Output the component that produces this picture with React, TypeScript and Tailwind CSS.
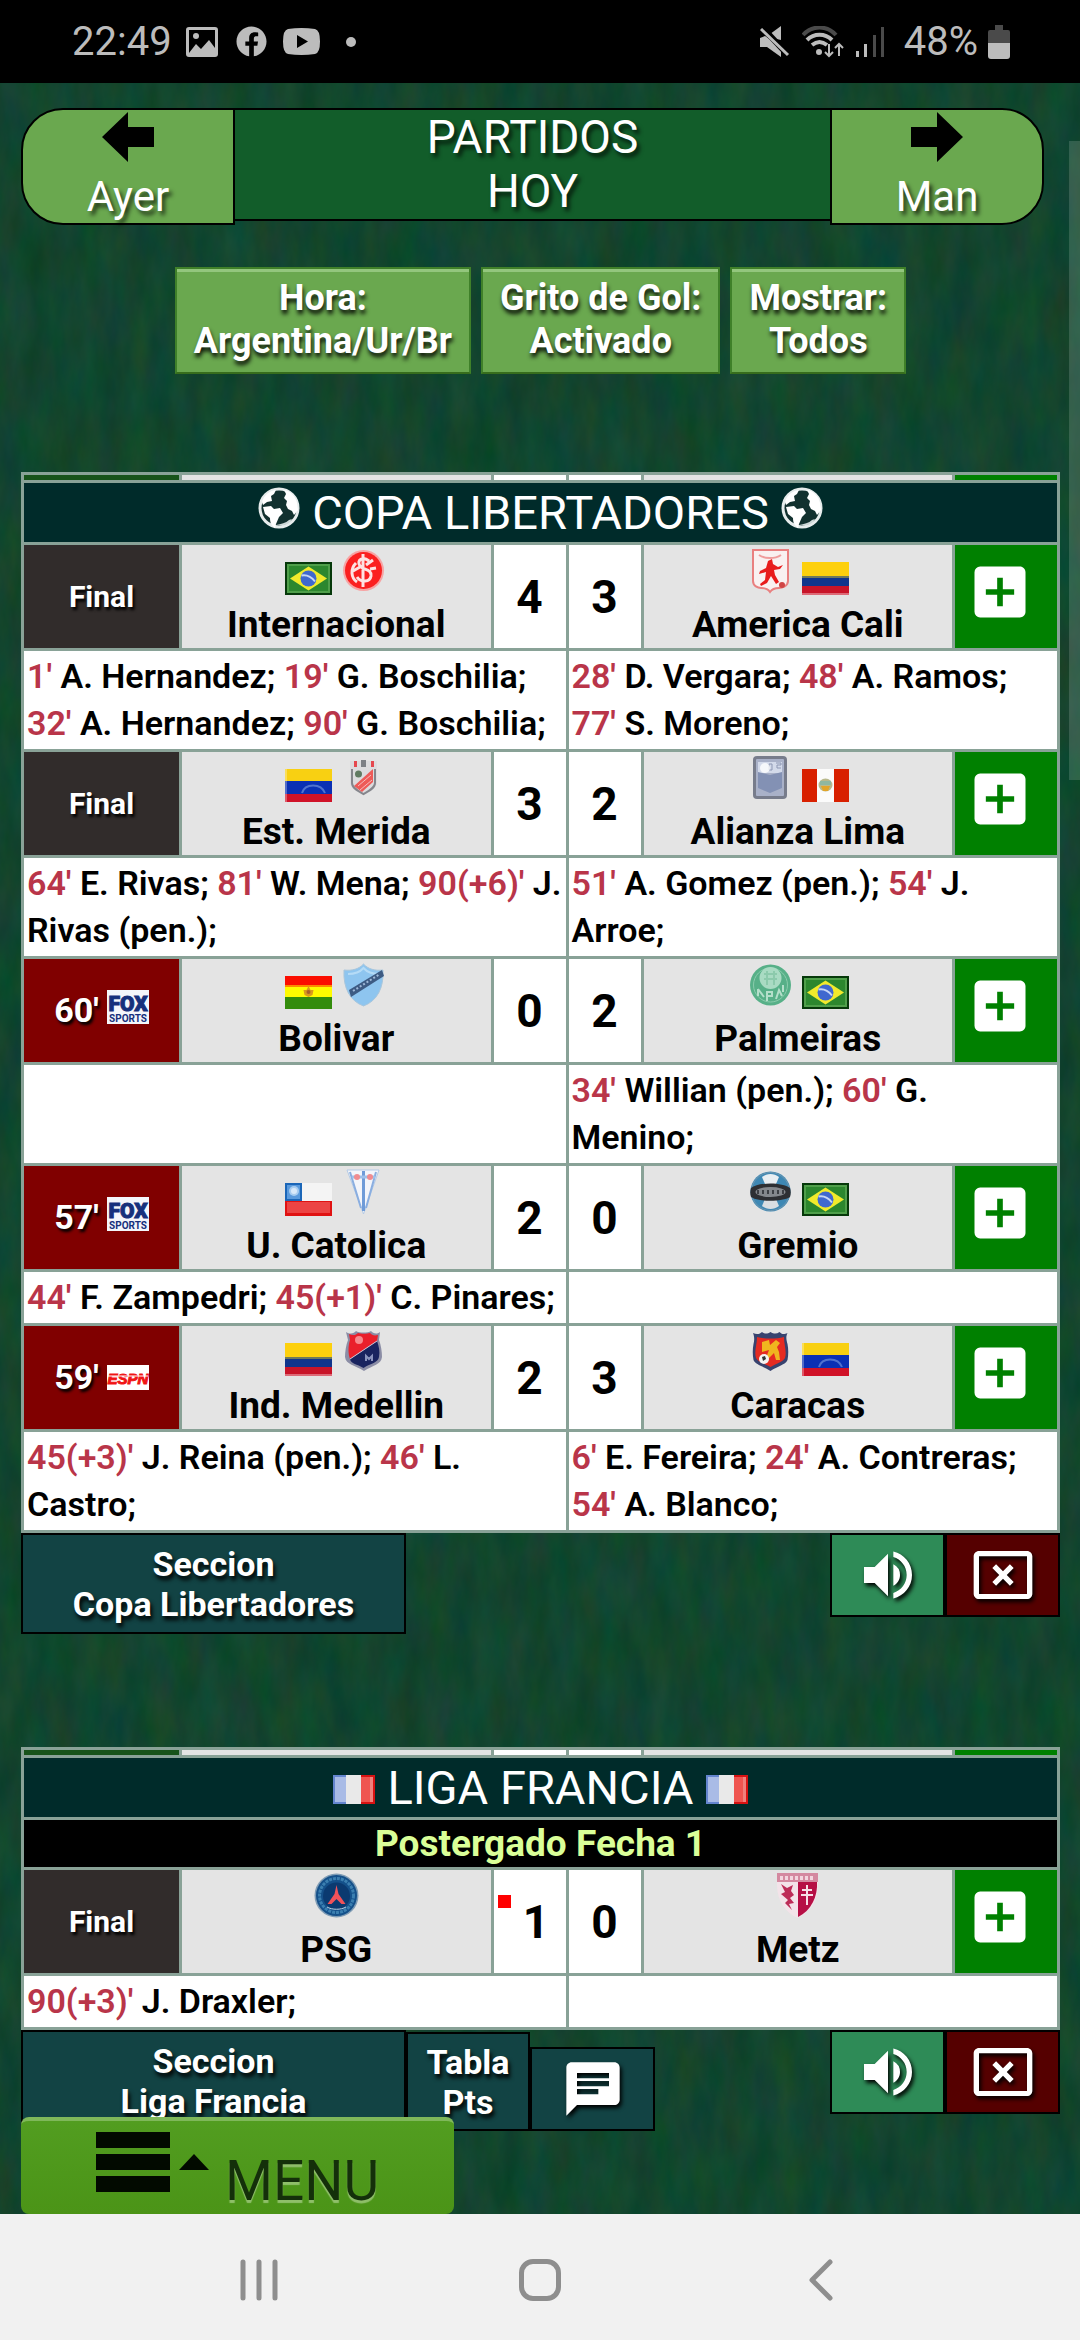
import type { ReactNode } from 'react'
import { Fragment } from 'react'
import { FaFacebook } from 'react-icons/fa'
import { MdAddBox, MdCancelPresentation, MdChat, MdVolumeUp } from 'react-icons/md'

type Goal = [minute: string, player: string]

interface Team {
  name: string
  flag?: ReactNode
  crest: ReactNode
  score: number
  redCard?: boolean
  goals: Goal[]
}

interface Match {
  status: string
  channel?: 'fox' | 'espn'
  home: Team
  away: Team
}

/* ---------- flags ---------- */

function FlagBox({ children }: { children: ReactNode }) {
  return (
    <svg viewBox="0 0 47 33" className="h-[33px] w-[47px] shrink-0" aria-hidden="true">
      {children}
    </svg>
  )
}

function Brazil() {
  return (
    <FlagBox>
      <rect width="47" height="33" fill="#06390a" />
      <rect x="2" y="2" width="43" height="29" fill="#4f9f4a" />
      <rect x="4" y="4" width="39" height="25" fill="#2c872e" />
      <path d="M5 16.500L23.500 4.500 42 16.500 23.500 28.500z" fill="#f1ea2c" />
      <circle cx="23.500" cy="16.500" r="8" fill="#3f68cf" />
      <path d="M16.500 13.500c5-1 10 1.500 13.500 6" stroke="#c6d6f5" strokeWidth="2" fill="none" />
    </FlagBox>
  )
}

function Colombia() {
  return (
    <FlagBox>
      <rect width="47" height="33" fill="#c81428" />
      <rect width="47" height="15" fill="#fdd00d" />
      <rect y="15" width="47" height="9" fill="#10358c" />
      <rect y="14" width="47" height="2" fill="#6f7a5c" />
      <rect y="31" width="47" height="2" fill="#dd6a77" />
    </FlagBox>
  )
}

function Venezuela() {
  return (
    <FlagBox>
      <rect width="47" height="33" fill="#d01228" />
      <rect width="47" height="12" fill="#f8d012" />
      <rect y="12" width="47" height="13" fill="#0a30b4" />
      <path d="M17 24c3-10 19-10 23 0" stroke="#4f72cf" strokeWidth="2" fill="none" />
      <rect width="2" height="33" fill="#fff" opacity="0.3" />
    </FlagBox>
  )
}

function Peru() {
  return (
    <FlagBox>
      <rect width="47" height="33" fill="#d82000" />
      <rect x="15" width="17" height="33" fill="#fbfbfb" />
      <ellipse cx="23.500" cy="16" rx="7" ry="6.500" fill="#b9b98c" />
      <path d="M18 12h11v4H18z" fill="#8fb7a0" />
      <path d="M19 17h9l-2 5h-5z" fill="#e2a52a" />
    </FlagBox>
  )
}

function Bolivia() {
  return (
    <FlagBox>
      <rect width="47" height="33" fill="#338c0c" />
      <rect width="47" height="21" fill="#fffb00" />
      <rect width="47" height="10" fill="#fb0d00" />
      <rect y="9" width="47" height="2" fill="#fd8a00" />
      <path d="M23.500 10l2 4h3l-1 5-4 2-4-2-1-5h3z" fill="#d99a1e" />
      <circle cx="23.500" cy="16" r="2" fill="#a8602a" />
    </FlagBox>
  )
}

function Chile() {
  return (
    <FlagBox>
      <rect width="47" height="33" fill="#f4f4f4" />
      <rect y="18" width="47" height="15" fill="#e01212" />
      <rect x="2" y="19" width="43" height="11" fill="#ec4444" />
      <rect width="17" height="18" fill="#1b66b8" />
      <rect x="2" y="2" width="13" height="14" fill="#5a9add" />
      <circle cx="9" cy="8" r="5" fill="#a9cdf0" />
      <circle cx="9" cy="8" r="3" fill="#d8e9fa" />
    </FlagBox>
  )
}

function France() {
  return (
    <svg viewBox="0 0 42 29" className="h-[29px] w-[42px] shrink-0" aria-hidden="true">
      <rect width="42" height="29" fill="#e9e9e9" />
      <rect width="13" height="29" fill="#6485cf" />
      <rect x="2" y="2" width="11" height="25" fill="#a9bbe6" />
      <rect x="28" width="14" height="29" fill="#d81212" />
      <rect x="28" y="2" width="12" height="25" fill="#ef5550" />
      <rect x="37" y="2" width="3" height="25" fill="#f0807c" />
    </svg>
  )
}

/* ---------- crests ---------- */

function CrestBox({ children }: { children: ReactNode }) {
  return (
    <svg viewBox="0 0 47 47" className="h-[47px] w-[47px] shrink-0" aria-hidden="true">
      {children}
    </svg>
  )
}

function Internacional() {
  return (
    <CrestBox>
      <circle cx="23.500" cy="23.500" r="20.500" fill="#f7a3a3" />
      <circle cx="23.500" cy="23.500" r="18.500" fill="#fb2020" />
      <path
        d="M23 7v33M29 14c-6-5-13-1-9 5 3 4 12 3 11 10-1 6-10 7-14 1M16 16c-6 6-5 15 1 19M33 13l-7 5M13 24l7-4M30 22l6-1"
        stroke="#fde3e3"
        strokeWidth="3"
        fill="none"
      />
    </CrestBox>
  )
}

function AmericaCali() {
  return (
    <CrestBox>
      <path d="M6 3h35v31c0 5-6 7-9 7-4 0-7 1-9 4-2-3-5-4-9-4-3 0-8-2-8-7z" fill="#f9f1f1" stroke="#e98080" strokeWidth="2" />
      <path d="M12 8c6 4 16 4 22 0" stroke="#ef9c9c" strokeWidth="2" fill="none" />
      <path d="M21 14l4-2 1 5 5 3 5-2-3 4-6 1 1 5 4 7-3 2-5-8-4 7-6 3-1-2 5-4 1-8-7 2 1-3 6-3z" fill="#e81c1c" />
      <circle cx="35" cy="38" r="3" fill="#d04545" />
    </CrestBox>
  )
}

function EstMerida() {
  return (
    <CrestBox>
      <path d="M10 7h27v21c0 6-7 10-13.500 13C17 38 10 34 10 28z" fill="#dcdcde" />
      <path d="M12 15v14c0 5 6 8 11.500 11C29 37 35 34 35 29V15" fill="none" stroke="#85868c" strokeWidth="2" />
      <path d="M14 7h3v6h-3zM31 7h3v6h-3z" fill="#e5484f" />
      <path d="M21 6h5v7h-5z" fill="#7d8085" />
      <path d="M14 32l19-17v13L22 38z" fill="#ee5b58" />
      <path d="M18 32l13-11M20 36l12-10" stroke="#f6bcbc" strokeWidth="1" />
      <circle cx="18.500" cy="20" r="3.500" fill="#607a62" />
    </CrestBox>
  )
}

function AlianzaLima() {
  return (
    <CrestBox>
      <rect x="6" y="2" width="34" height="43" rx="4" fill="#777c8b" />
      <rect x="9" y="5" width="28" height="37" rx="1" fill="#a9b1c8" />
      <rect x="11" y="8" width="24" height="11" fill="#d3daea" />
      <path d="M22 10h3v6h-3zM29 9h5v2h-4v3h4" stroke="#8d97b3" strokeWidth="1" fill="none" />
      <path d="M11 18l12 3 12-3v16l-12 5-12-5z" fill="#8391b4" />
      <circle cx="18" cy="14" r="5" fill="#fff" opacity="0.8" />
    </CrestBox>
  )
}

function BolivarCrest() {
  return (
    <CrestBox>
      <path d="M4 9c8 1 15-1 19.500-6C28 8 35 10 43 9c1 18-6 31-19.500 36C10 40 3 27 4 9z" fill="#8ec5ef" stroke="#a9c6dc" strokeWidth="1" />
      <path d="M8 13c7 0 12-2 15.500-6 3.500 4 9 6 15.500 6" fill="none" stroke="#b5dbf6" strokeWidth="2" />
      <path d="M9 29L42 9l2 6-33 21z" fill="#3d5b83" />
      <path d="M13 30L40 13" stroke="#9fb9d8" strokeWidth="2" strokeDasharray="2 2" />
    </CrestBox>
  )
}

function PalmeirasCrest() {
  return (
    <CrestBox>
      <circle cx="23.500" cy="24" r="20.500" fill="#57b088" />
      <circle cx="23.500" cy="24" r="17" fill="none" stroke="#8accac" strokeWidth="1" />
      <circle cx="23.500" cy="17" r="11" fill="#a9dbc3" />
      <path d="M17 13h13M17 18h13M20 10v14M27 10v14" stroke="#8ccaac" strokeWidth="2" />
      <path d="M11 28v7M11 28l6 8M20 30v10M20 31h5v4h-5M29 38l3-9 3 6M36 24v7" stroke="#b4dfca" strokeWidth="2" fill="none" />
    </CrestBox>
  )
}

function CatolicaCrest() {
  return (
    <CrestBox>
      <path d="M7 2h32L23.500 46z" fill="#f3f5fa" stroke="#b5cbe6" strokeWidth="1" />
      <path d="M10 4l11 36M36 4L26 40" stroke="#8aaee0" strokeWidth="2" fill="none" />
      <path d="M23.500 3v40" stroke="#6f9bd8" strokeWidth="3" />
      <path d="M12 9h23" stroke="#9ec0ea" strokeWidth="3" />
      <circle cx="17" cy="9" r="3" fill="#f08c90" />
      <circle cx="30" cy="9" r="3" fill="#f08c90" />
    </CrestBox>
  )
}

function GremioCrest() {
  return (
    <CrestBox>
      <circle cx="23.500" cy="23.500" r="20" fill="#3e88b4" />
      <circle cx="23.500" cy="23.500" r="19" fill="none" stroke="#6e96af" strokeWidth="1" />
      <path d="M15 9c5-4 12-4 17 0l-3 7H18z" fill="#e8eef2" />
      <path d="M15 38c5 4 12 4 17 0l-3-7H18z" fill="#d9dee2" />
      <path d="M4 20c8-6 31-6 39 0 1 3 1 6 0 9-8 5-31 5-39 0-1-3-1-6 0-9z" fill="#2d2f33" />
      <ellipse cx="23.500" cy="24" rx="15" ry="5" fill="#84888d" />
      <path d="M10 24h27" stroke="#3d4045" strokeWidth="4" strokeDasharray="2 3" />
    </CrestBox>
  )
}

function MedellinCrest() {
  return (
    <CrestBox>
      <path d="M6 4c5 3 8 1 10-1 3 2 12 2 15 0 2 2 5 4 9 1l-1 8c2 5 3 12 3 17-1 8-9 8-18 14C15 37 6 37 5 29c0-5 1-12 3-17z" fill="#8b8da5" />
      <path d="M9 6c4 2 7 1 9-1 3 1 9 1 12 0 2 2 4 3 8 2l-1 6L10 31C8 26 8 18 10 12z" fill="#ea1f2b" />
      <path d="M37 13c2 5 3 11 2 16-1 6-8 6-15.500 11C17 36 11 36 10 31z" fill="#19235f" />
      <path d="M10 31l27-18" stroke="#d9c4d2" strokeWidth="1" />
      <path d="M26 33v-5l3 3 3-3v5" stroke="#8a93bd" strokeWidth="2" fill="none" />
      <circle cx="19" cy="12" r="4" fill="#f58a8e" />
    </CrestBox>
  )
}

function CaracasCrest() {
  return (
    <CrestBox>
      <path d="M6 5c4 2 7 1 9-1 3 2 5 2 8.500 0 3.500 2 6 2 9 0 2 2 4 3 8 1-2 4-1 7 0 11 1 5 1 11 0 16-2 5-10 6-17 11-7-5-15-6-17-11-1-5-1-11 0-16 1-4 1-7-.5-11z" fill="#38436f" />
      <path d="M10 9c8 2 19 2 27 0 0 8 3 14 1 21-2 4-8 5-14.500 9C17 35 11 34 9 30c-2-7 1-13 1-21z" fill="#e52b22" />
      <path d="M15 14l7-2 1 5 6-5 4 3-3 4 2 5 1 8h-4l-2-7-5 5h-3l3-8-7 2z" fill="#f0b51f" />
      <circle cx="17" cy="31" r="5" fill="#f4f4f4" />
      <path d="M15 29l3-1 1 3-3 2z" fill="#333" />
    </CrestBox>
  )
}

function PsgCrest() {
  return (
    <CrestBox>
      <circle cx="23.500" cy="23.500" r="22" fill="#7f9cb5" />
      <circle cx="23.500" cy="23.500" r="20.500" fill="#14508a" />
      <circle cx="23.500" cy="23.500" r="17" fill="none" stroke="#3b7fb0" strokeWidth="3" strokeDasharray="3 1" />
      <circle cx="23.500" cy="24" r="13.500" fill="#0b3a70" />
      <path d="M23.500 13l2 9 7 10h-4l-5-5-5 5h-4l7-10z" fill="#f0525a" />
      <path d="M14 35c5 3 14 3 19 0" stroke="#b8cfe0" strokeWidth="1" fill="none" />
    </CrestBox>
  )
}

function MetzCrest() {
  return (
    <CrestBox>
      <path d="M3 1h41v12c0 16-9 28-20.500 33C12 41 3 29 3 13z" fill="#f3e3e9" />
      <path d="M3 1h41v9H3z" fill="#d489a0" />
      <path d="M6 6h35" stroke="#f2d5de" strokeWidth="4" strokeDasharray="3 2" />
      <path d="M24 10h19c1 14-6 29-19 35z" fill="#b60f45" />
      <path d="M33 13v20M28 18h10M27 23h12" stroke="#f6dfe6" strokeWidth="2" />
      <path d="M7 12l6 4 6-3-2 6 3 4-4 3 4 5-5 1 3 6-7-7 3-3-7-6 4-2z" fill="#bd2c58" />
    </CrestBox>
  )
}

function Globe() {
  return (
    <svg viewBox="0 0 42 42" className="h-[42px] w-[42px] shrink-0" aria-hidden="true">
      <circle cx="21" cy="21" r="19" fill="#12312f" stroke="#e6ecec" strokeWidth="3" />
      <path d="M4 15C6 8 11 4 18 3l-2 4-3 2 1 5-5 1-4 3zM5 20l8-1 3 3 6-1 3 5-4 4-3 7-1 4c-4-3-5-6-5-10l-5-4z" fill="#fff" />
      <path d="M26 3c7 1 12 7 13 13l1 7-4 5-2-4-4-2-2-4 1-4-3-3 2-4z" fill="#fff" />
      <path d="M18 38c6 1 11 0 14-3l2-3-3 1c-3 3-8 4-13 5z" fill="#cfd9d9" />
    </svg>
  )
}

/* ---------- channel logos ---------- */

function Channel({ name }: { name: 'fox' | 'espn' }) {
  if (name === 'espn') {
    return (
      <svg viewBox="0 0 42 25" className="h-[25px] w-[42px] [text-shadow:none]" role="img" aria-label="ESPN">
        <rect width="42" height="25" fill="#fff" />
        <text x="21" y="19" textAnchor="middle" fontFamily="Liberation Sans, sans-serif" fontSize="15" fontWeight="bold" fontStyle="italic" fill="#f01414" stroke="#f01414">ESPN</text>
        <path d="M1 11h40" stroke="#fff" strokeWidth="1" />
      </svg>
    )
  }
  return (
    <svg viewBox="0 0 42 34" className="h-[34px] w-[42px] [text-shadow:none]" role="img" aria-label="Fox Sports">
      <rect width="42" height="34" fill="#f4f6fb" />
      <text x="21" y="21" textAnchor="middle" fontFamily="Roboto, sans-serif" fontSize="21" fontWeight="900" fill="#16307c" stroke="#16307c">FOX</text>
      <text x="21" y="32" textAnchor="middle" fontFamily="Roboto, sans-serif" fontSize="10" fontWeight="700" fill="#16307c">SPORTS</text>
    </svg>
  )
}

/* ---------- data ---------- */

const libertadores: Match[] = [
  {
    status: 'Final',
    home: { name: 'Internacional', flag: <Brazil />, crest: <Internacional />, score: 4, goals: [["1'", 'A. Hernandez'], ["19'", 'G. Boschilia'], ["32'", 'A. Hernandez'], ["90'", 'G. Boschilia']] },
    away: { name: 'America Cali', flag: <Colombia />, crest: <AmericaCali />, score: 3, goals: [["28'", 'D. Vergara'], ["48'", 'A. Ramos'], ["77'", 'S. Moreno']] },
  },
  {
    status: 'Final',
    home: { name: 'Est. Merida', flag: <Venezuela />, crest: <EstMerida />, score: 3, goals: [["64'", 'E. Rivas'], ["81'", 'W. Mena'], ["90(+6)'", 'J. Rivas (pen.)']] },
    away: { name: 'Alianza Lima', flag: <Peru />, crest: <AlianzaLima />, score: 2, goals: [["51'", 'A. Gomez (pen.)'], ["54'", 'J. Arroe']] },
  },
  {
    status: "60'",
    channel: 'fox',
    home: { name: 'Bolivar', flag: <Bolivia />, crest: <BolivarCrest />, score: 0, goals: [] },
    away: { name: 'Palmeiras', flag: <Brazil />, crest: <PalmeirasCrest />, score: 2, goals: [["34'", 'Willian (pen.)'], ["60'", 'G. Menino']] },
  },
  {
    status: "57'",
    channel: 'fox',
    home: { name: 'U. Catolica', flag: <Chile />, crest: <CatolicaCrest />, score: 2, goals: [["44'", 'F. Zampedri'], ["45(+1)'", 'C. Pinares']] },
    away: { name: 'Gremio', flag: <Brazil />, crest: <GremioCrest />, score: 0, goals: [] },
  },
  {
    status: "59'",
    channel: 'espn',
    home: { name: 'Ind. Medellin', flag: <Colombia />, crest: <MedellinCrest />, score: 2, goals: [["45(+3)'", 'J. Reina (pen.)'], ["46'", 'L. Castro']] },
    away: { name: 'Caracas', flag: <Venezuela />, crest: <CaracasCrest />, score: 3, goals: [["6'", 'E. Fereira'], ["24'", 'A. Contreras'], ["54'", 'A. Blanco']] },
  },
]

const francia: Match[] = [
  {
    status: 'Final',
    home: { name: 'PSG', crest: <PsgCrest />, score: 1, redCard: true, goals: [["90(+3)'", 'J. Draxler']] },
    away: { name: 'Metz', crest: <MetzCrest />, score: 0, goals: [] },
  },
]

/* ---------- table ---------- */

function StatusCell({ status, channel }: { status: string; channel?: 'fox' | 'espn' }) {
  if (!channel) {
    return (
      <td className="h-[103px] bg-[#312c2b] text-center text-[30px] font-bold text-white [text-shadow:2px_3px_3px_#000]">
        {status}
      </td>
    )
  }
  return (
    <td className="h-[103px] bg-[#800000]">
      <div className="flex items-center justify-center gap-2 text-[34px] font-bold text-white [text-shadow:2px_3px_3px_#000]">
        {status}
        <div className={channel === 'fox' ? 'pb-[8px]' : ''}>
          <Channel name={channel} />
        </div>
      </div>
    </td>
  )
}

function TeamCell({ team, away }: { team: Team; away?: boolean }) {
  return (
    <td className="bg-[#e4e4e4] pt-[2px] align-top">
      <div className="flex h-[54px] items-start justify-center gap-2">
        {away && team.crest}
        {team.flag && <div className="pt-[15px]">{team.flag}</div>}
        {!away && team.crest}
      </div>
      <div className="text-center text-[37px] leading-[47px] font-bold">{team.name}</div>
    </td>
  )
}

function ScoreCell({ team }: { team: Team }) {
  return (
    <td className="bg-white text-[46px] leading-[54px] font-bold">
      <div className="flex justify-center gap-3">
        {team.redCard && <span className="-ml-3 h-[13px] w-[13px] bg-[#ff0000]" />}
        {team.score}
      </div>
    </td>
  )
}

function GoalsCell({ goals }: { goals: Goal[] }) {
  return (
    <td colSpan={3} className="h-[51px] bg-white px-[3px] py-[2px] align-top text-[34px] leading-[47px] font-semibold">
      {goals.map(([minute, player]) => (
        <Fragment key={minute}>
          <span className="text-[#b93549]">{minute}</span> {player};{' '}
        </Fragment>
      ))}
    </td>
  )
}

function MatchRows({ match }: { match: Match }) {
  return (
    <>
      <tr>
        <StatusCell status={match.status} channel={match.channel} />
        <TeamCell team={match.home} />
        <ScoreCell team={match.home} />
        <ScoreCell team={match.away} />
        <TeamCell team={match.away} away />
        <td className="bg-[#008000]">
          <button type="button" aria-label="Ver detalle" className="block w-full pr-3 pb-[10px] text-white">
            <MdAddBox className="mx-auto h-[68px] w-[68px]" />
          </button>
        </td>
      </tr>
      <tr>
        <GoalsCell goals={match.home.goals} />
        <GoalsCell goals={match.away.goals} />
      </tr>
    </>
  )
}

interface LeagueProps {
  title: string
  icon: ReactNode
  note?: string
  matches: Match[]
}

function LeagueTable({ title, icon, note, matches }: LeagueProps) {
  return (
    <table className="w-full table-fixed border-separate border-spacing-[3px] bg-[#89a297] text-black">
      <colgroup>
        <col className="w-[155px]" />
        <col />
        <col className="w-[72px]" />
        <col className="w-[72px]" />
        <col />
        <col className="w-[102px]" />
      </colgroup>
      <tbody>
        <tr>
          <td className="h-[5px] bg-[#17531a]" />
          <td className="bg-[#e4e4e4]" />
          <td className="bg-white" />
          <td className="bg-white" />
          <td className="bg-[#e4e4e4]" />
          <td className="bg-[#008000]" />
        </tr>
        <tr>
          <th colSpan={6} className="h-[59px] bg-[#002b2a] font-normal text-white">
            <div className="flex items-baseline justify-center gap-3 text-[47px] leading-[54px]">
              {icon}
              {title}
              {icon}
            </div>
          </th>
        </tr>
        {note && (
          <tr>
            <th colSpan={6} className="bg-black text-[37px] leading-[47px] font-bold text-[#daff98]">
              {note}
            </th>
          </tr>
        )}
        {matches.map((m) => (
          <MatchRows key={m.home.name} match={m} />
        ))}
      </tbody>
    </table>
  )
}

const sectionBtn =
  'border-2 border-black bg-[#124344] text-center text-[34px] leading-[40px] font-bold text-white [text-shadow:2px_4px_4px_#000]'

function SoundAndClose() {
  return (
    <div className="ml-auto flex">
      <button type="button" aria-label="Sonido" className="flex h-[84px] w-[115px] items-center justify-center border-2 border-black bg-[#2e8b57] text-white">
        <MdVolumeUp className="h-16 w-16 drop-shadow-[2px_3px_2px_#000]" />
      </button>
      <button type="button" aria-label="Cerrar" className="flex h-[84px] w-[115px] items-center justify-center border-2 border-black bg-[#550000] text-white">
        <MdCancelPresentation className="h-16 w-16 drop-shadow-[2px_3px_2px_#000]" />
      </button>
    </div>
  )
}

/* ---------- phone chrome ---------- */

function StatusBar() {
  return (
    <div className="flex h-[83px] items-center bg-black pr-[70px] pl-[72px] text-[40px] leading-[47px] text-[#bcbcbc]">
      <span className="mr-[14px]">22:49</span>
      <svg viewBox="0 0 32 30" className="mr-[18px] h-[30px] w-8" aria-hidden="true">
        <path d="M3 0h26a3 3 0 0 1 3 3v24a3 3 0 0 1-3 3H3a3 3 0 0 1-3-3V3a3 3 0 0 1 3-3zm0 3v23l7-9 5 5 8-9 6 8V3z" fill="currentColor" fillRule="evenodd" />
        <circle cx="10" cy="9" r="3" fill="currentColor" />
        <path d="M4 27l6-8 5 5 8-9 6 8v4z" fill="currentColor" />
      </svg>
      <FaFacebook className="mr-4 h-[31px] w-[31px]" />
      <svg viewBox="0 0 37 27" className="mr-[26px] h-[27px] w-[37px]" aria-hidden="true">
        <path d="M5 1Q18.500-1 32 1q5 1 5 12.500T32 26q-13.500 2-27 0-5-1-5-12.500T5 1zm9 6v13l11-6.500z" fill="currentColor" fillRule="evenodd" />
      </svg>
      <span className="h-[10px] w-[10px] rounded-full bg-[#bcbcbc]" />
      <svg viewBox="0 0 30 32" className="mr-3 ml-auto h-8 w-[30px]" aria-hidden="true">
        <path d="M0 11h6L21 0v14L8 11zM0 12v9h7l14 10V21L5 10z" fill="currentColor" />
        <path d="M2 1l26 28" stroke="#000" strokeWidth="6" />
        <path d="M1 3l27 26" stroke="currentColor" strokeWidth="3" />
      </svg>
      <svg viewBox="0 0 42 32" className="mr-3 h-8 w-[42px]" fill="none" aria-hidden="true">
        <path d="M1 9c9-10 24-10 33 0" stroke="#4a4a4a" strokeWidth="4" />
        <path d="M5 14c7-7 18-7 25 0M10 19c5-4 10-4 15 0" stroke="currentColor" strokeWidth="4" />
        <circle cx="17" cy="26" r="3" fill="currentColor" />
        <path d="M27 18v12M23 26l4 4 4-4M37 30V18M33 22l4-4 4 4" stroke="currentColor" strokeWidth="2" />
      </svg>
      <svg viewBox="0 0 28 30" className="mr-[20px] h-[30px] w-7" aria-hidden="true">
        <path d="M0 24h3v6H0zM8 17h3v13H8z" fill="currentColor" />
        <path d="M17 8h3v22h-3zM25 0h3v30h-3z" fill="#4a4a4a" />
      </svg>
      <span className="mr-[10px]">48%</span>
      <svg viewBox="0 0 22 34" className="h-[34px] w-[22px]" aria-hidden="true">
        <path d="M7 0h8v5h5a2 2 0 0 1 2 2v12H0V7a2 2 0 0 1 2-2h5z" fill="#4a4a4a" />
        <path d="M0 18h22v13a3 3 0 0 1-3 3H3a3 3 0 0 1-3-3z" fill="currentColor" />
      </svg>
    </div>
  )
}

function NavBar() {
  return (
    <nav className="grid h-[126px] grid-cols-3 place-items-center bg-[#f1f1f1] px-[118px] pt-[5px] text-[#8e8e8e]">
      <button type="button" aria-label="Recientes">
        <svg viewBox="0 0 38 42" className="h-[42px] w-[38px]" stroke="currentColor" strokeWidth="5" strokeLinecap="round">
          <path d="M3 3v36M19 3v36M35 3v36" />
        </svg>
      </button>
      <button type="button" aria-label="Inicio" className="h-[42px] w-[42px] rounded-[14px] border-[5px] border-[#8e8e8e]" />
      <button type="button" aria-label="Atras">
        <svg viewBox="0 0 24 42" className="h-[42px] w-6" fill="none" stroke="currentColor" strokeWidth="5" strokeLinecap="round" strokeLinejoin="round">
          <path d="M21 3L3 21l18 18" />
        </svg>
      </button>
    </nav>
  )
}

function Felt() {
  return (
    <svg className="absolute inset-0 h-full w-full" aria-hidden="true">
      <defs>
        <filter id="felt" x="0" y="0" width="100%" height="100%" colorInterpolationFilters="sRGB">
          <feTurbulence type="fractalNoise" baseFrequency="0.04 0.015" numOctaves="4" seed="7" />
          <feColorMatrix values="0.120 0 0 0 0.010  0 0.080 0 0 0.230  0 0 0.100 0 0.130  0 0 0 0 1" />
        </filter>
      </defs>
      <rect width="100%" height="100%" fill="#11462e" />
      <rect width="100%" height="100%" filter="url(#felt)" />
    </svg>
  )
}

const dayBtn =
  'flex h-[117px] flex-col items-center border-2 border-black bg-[#6aa84f] pt-[2px] text-[42px] leading-[48px] text-white [text-shadow:3px_4px_4px_rgba(0,0,0,0.7)]'
const filterBtn =
  'border-2 border-t-[#3f8029] border-r-[#3f8029] border-b-[#376d1c] border-l-[#3f8029] bg-[#6aa84f] px-[17px] pt-2 pb-[9px] text-[36px] leading-[43px] font-bold text-white shadow-[inset_0_3px_0_#93c67d] [text-shadow:1px_4px_4px_rgba(0,0,0,0.9)]'

export default function App() {
  return (
    <div className="flex min-h-screen flex-col font-['Roboto',sans-serif]">
      <StatusBar />
      <main className="relative flex-1 pt-[25px] pr-[20px] pb-20 pl-[21px]">
        <Felt />
        <div className="relative">
          <header className="mr-4 flex items-start">
            <button type="button" className={`${dayBtn} w-[214px] rounded-l-[42px]`}>
              <svg viewBox="0 0 52 50" className="h-[50px] w-[52px]" aria-hidden="true">
                <path d="M0 25L26 0v15h26v20H26v15z" fill="#000" />
              </svg>
              <span className="pt-[11px]">Ayer</span>
            </button>
            <h1 className="h-[113px] flex-1 border-y-2 border-black bg-[#125d2a] text-center text-[46px] leading-[54px] text-white [text-shadow:3px_4px_4px_rgba(0,0,0,0.7)]">
              PARTIDOS
              <br />
              HOY
            </h1>
            <button type="button" className={`${dayBtn} w-[214px] rounded-r-[42px]`}>
              <svg viewBox="0 0 52 50" className="h-[50px] w-[52px]" aria-hidden="true">
                <path d="M52 25L26 0v15H0v20h26v15z" fill="#000" />
              </svg>
              <span className="pt-[11px]">Man</span>
            </button>
          </header>

          <div className="mt-[42px] flex justify-center gap-[10px]">
            <button type="button" className={filterBtn}>
              Hora:
              <br />
              Argentina/Ur/Br
            </button>
            <button type="button" className={filterBtn}>
              Grito de Gol:
              <br />
              Activado
            </button>
            <button type="button" className={filterBtn}>
              Mostrar:
              <br />
              Todos
            </button>
          </div>

          <section className="mt-[98px]">
            <LeagueTable title="COPA LIBERTADORES" icon={<Globe />} matches={libertadores} />
            <div className="flex items-start">
              <button type="button" className={`${sectionBtn} h-[101px] w-[385px]`}>
                Seccion
                <br />
                Copa Libertadores
              </button>
              <SoundAndClose />
            </div>
          </section>

          <section className="mt-[113px]">
            <LeagueTable title="LIGA FRANCIA" icon={<France />} note="Postergado Fecha 1" matches={francia} />
            <div className="flex items-start">
              <div className="flex items-end">
                <button type="button" className={`${sectionBtn} h-[101px] w-[385px]`}>
                  Seccion
                  <br />
                  Liga Francia
                </button>
                <button type="button" className={`${sectionBtn} h-[99px] w-[124px]`}>
                  Tabla
                  <br />
                  Pts
                </button>
                <button type="button" aria-label="Comentarios" className={`${sectionBtn} flex h-[84px] w-[125px] items-center justify-center`}>
                  <MdChat className="h-16 w-16 drop-shadow-[2px_3px_2px_#000]" />
                </button>
              </div>
              <SoundAndClose />
            </div>
          </section>
        </div>

        <div className="absolute top-[58px] right-0 h-[639px] w-[11px] bg-white/15" />

        <button
          type="button"
          className="absolute bottom-0 left-[21px] flex h-[97px] w-[433px] items-start rounded-lg border-t-4 border-[#7fb85a] bg-linear-to-b from-[#529d20] to-[#4b9417] pt-[11px] pl-[75px] text-[55px] leading-[61px] text-[#14300a] [text-shadow:0_3px_1px_#8fbf6a]"
        >
          <svg viewBox="0 0 113 60" className="h-[60px] w-[113px]" aria-hidden="true">
            <path d="M0 0h74v16H0zM0 22h74v16H0zM0 44h74v16H0zM83 38l15-16 15 16z" fill="#020a00" />
          </svg>
          <span className="pt-[19px] pl-4">MENU</span>
        </button>
      </main>
      <NavBar />
    </div>
  )
}
